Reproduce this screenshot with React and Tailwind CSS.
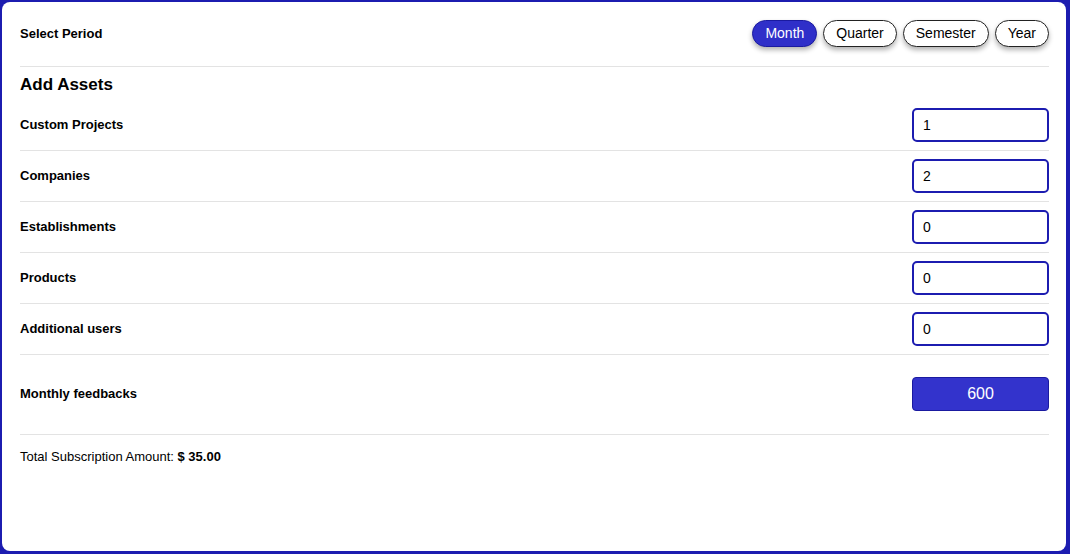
import { useState } from 'react'

const assets = [
  { label: 'Custom Projects', value: '1' },
  { label: 'Companies', value: '2' },
  { label: 'Establishments', value: '0' },
  { label: 'Products', value: '0' },
  { label: 'Additional users', value: '0' },
]

const periods = ['Month', 'Quarter', 'Semester', 'Year']

export default function App() {
  const [period, setPeriod] = useState('Month')

  return (
    <div
      className="h-[554px] w-[1070px] bg-[#1c1cb0] pl-[2px] pt-[2px] pr-[4px] pb-[3px]"
      style={{ fontFamily: '"Liberation Sans", Arial, sans-serif' }}
    >
      <div className="h-full rounded-lg bg-white pl-[18px] pr-[17px] text-black">
        {/* Period selector */}
        <div className="flex items-center justify-between border-b border-[#e3e3e3] pt-[18px] pb-[19px]">
          <span className="text-[13px] font-bold">Select Period</span>
          <div className="flex gap-[6px]">
            {periods.map((p) => (
              <button
                key={p}
                onClick={() => setPeriod(p)}
                className={
                  p === period
                    ? 'h-[27px] rounded-full border border-[#1a1aa0] bg-[#2f2fc9] px-[12px] text-[14px] text-white shadow-[0_3px_5px_rgba(0,0,0,0.3)]'
                    : 'h-[27px] rounded-full border border-[#222] bg-white px-[12px] text-[14px] text-black shadow-[0_3px_5px_rgba(0,0,0,0.3)]'
                }
              >
                {p}
              </button>
            ))}
          </div>
        </div>

        {/* Assets */}
        <h2 className="pt-[6px] pb-[3px] text-[17px] leading-6 font-bold">Add Assets</h2>
        {assets.map((a) => (
          <div key={a.label} className="flex items-center justify-between border-b border-[#e3e3e3] py-2">
            <span className="text-[13px] font-bold">{a.label}</span>
            <input
              defaultValue={a.value}
              className="h-[34px] w-[137px] rounded-[5px] border-2 border-[#1c1cb0] px-[9px] text-[14px] outline-none"
            />
          </div>
        ))}

        <div className="flex items-center justify-between border-b border-[#e3e3e3] pt-[22px] pb-[23px]">
          <span className="text-[13px] font-bold">Monthly feedbacks</span>
          <button className="h-[34px] w-[137px] rounded-[4px] border border-[#1a1aa0] bg-[#3333cc] text-[16px] text-white">
            600
          </button>
        </div>

        <div className="pt-[12px] text-[13px]">
          Total Subscription Amount: <span className="font-bold">$ 35.00</span>
        </div>
      </div>
    </div>
  )
}
